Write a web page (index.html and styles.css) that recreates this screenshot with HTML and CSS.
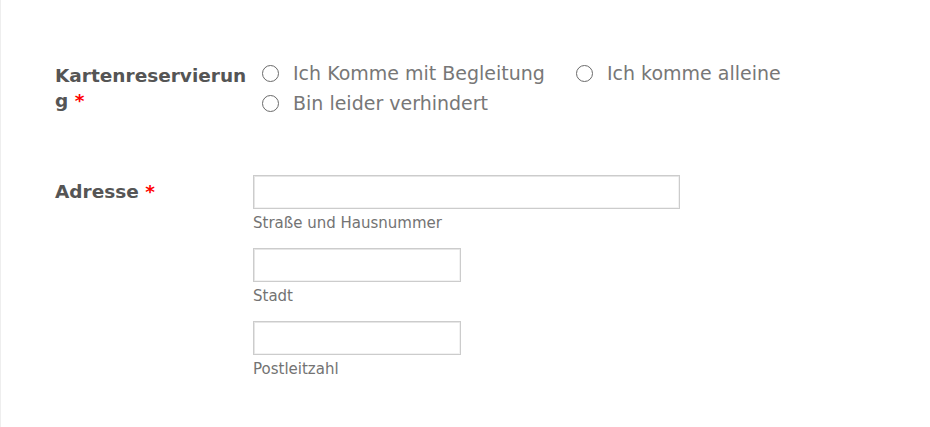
FILE: index.html
```html
<!DOCTYPE html>
<html lang="de">
<head>
<meta charset="utf-8">
<link rel="stylesheet" href="styles.css">
</head>
<body>
<div class="page">
  <form class="form">
    <div class="row row-radio">
      <div class="label">Kartenreservierung <span class="req">*</span></div>
      <div class="field radios">
        <label class="radio"><span class="circle"></span><span class="rtext">Ich Komme mit Begleitung</span></label>
        <label class="radio"><span class="circle"></span><span class="rtext">Ich komme alleine</span></label>
        <label class="radio"><span class="circle"></span><span class="rtext">Bin leider verhindert</span></label>
      </div>
    </div>
    <div class="row row-address">
      <div class="label">Adresse <span class="req">*</span></div>
      <div class="field address">
        <div class="sub">
          <div class="input wide"></div>
          <div class="sublabel">Straße und Hausnummer</div>
        </div>
        <div class="sub">
          <div class="input narrow"></div>
          <div class="sublabel">Stadt</div>
        </div>
        <div class="sub">
          <div class="input narrow"></div>
          <div class="sublabel">Postleitzahl</div>
        </div>
      </div>
    </div>
  </form>
</div>
</body>
</html>
```
FILE: styles.css
```css
html, body {
  margin: 0;
  padding: 0;
  background: #fff;
}
.page {
  width: 930px;
  height: 427px;
  box-sizing: border-box;
  border-left: 1px solid #eeeeee;
  font-family: "DejaVu Sans", Verdana, sans-serif;
  overflow: hidden;
}
.form {
  padding: 63px 0 0 54px;
}
.row {
  display: flex;
}
.label {
  width: 194px;
  flex: none;
  font-weight: bold;
  font-size: 18.5px;
  line-height: 25px;
  color: #555555;
  word-break: break-all;
}
.req {
  color: #ff0000;
}
.field {
  margin-left: 4px;
}
.radios {
  display: flex;
  flex-wrap: wrap;
  width: 580px;
  margin-top: -5px;
}
.radio {
  display: flex;
  align-items: center;
  height: 30px;
  margin-right: 22px;
  margin-left: 9px;
}
.circle {
  width: 17px;
  height: 17px;
  box-sizing: border-box;
  border: 1px solid #6a6a6a;
  border-radius: 50%;
  margin-right: 14px;
}
.rtext {
  font-size: 19px;
  color: #777777;
}
.row-address {
  margin-top: 58px;
}
.row-address .label {
  padding-top: 3px;
}
.address {
  display: flex;
  flex-direction: column;
  margin-top: -1px;
}
.sub {
  margin-bottom: 15px;
}
.input {
  height: 34px;
  box-sizing: border-box;
  border: 1px solid #cccccc;
  box-shadow: inset 1px 1px 0 #e6e6e6, inset -1px -1px 0 #f2f2f2;
  background: #fff;
}
.wide { width: 427px; }
.narrow { width: 208px; }
.sublabel {
  font-size: 15px;
  color: #737373;
  margin-top: 4px;
  line-height: 20px;
}
```
